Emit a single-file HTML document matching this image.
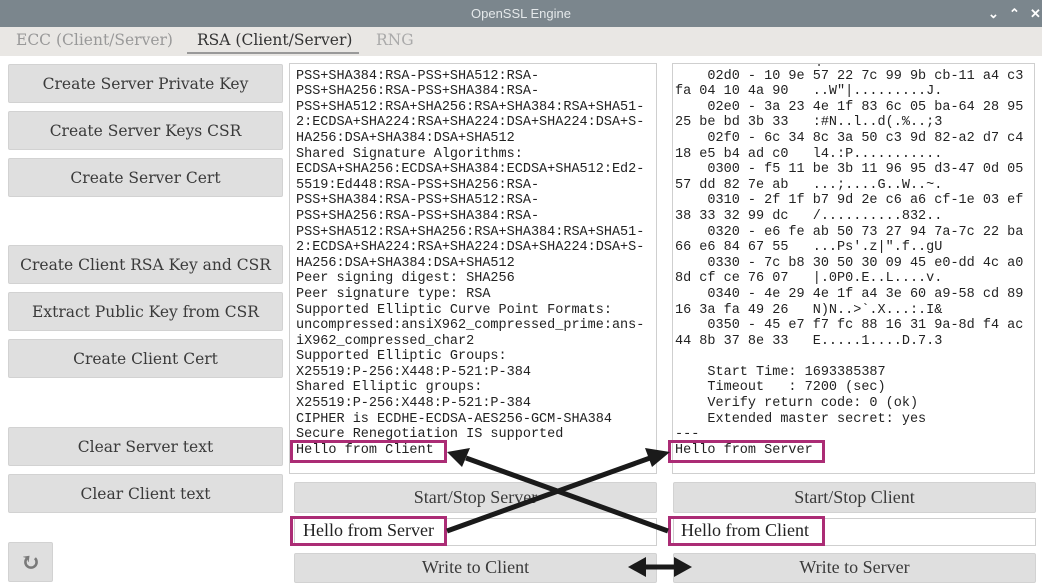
<!DOCTYPE html>
<html><head><meta charset="utf-8"><style>
*{box-sizing:border-box;margin:0;padding:0}
body{width:1042px;height:579px;overflow:hidden;background:#fff;position:relative;font-family:"Liberation Serif",serif}
.title{position:absolute;left:0;top:0;width:1042px;height:27px;background:#7b868d;color:#e4e8ea;font:13px "Liberation Sans",sans-serif;text-align:center;line-height:27px}
.ctl{position:absolute;top:0;color:#fff;font:bold 13px "Liberation Sans",sans-serif;line-height:27px}
.tabs{position:absolute;left:0;top:27px;width:1042px;height:29px;background:#e9e7e4}
.tab{position:absolute;top:4px;font-family:"DejaVu Serif",serif;font-size:15.5px;color:#999}
.btn{position:absolute;background:#dfdfdf;border:1px solid #d2d2d2;border-radius:2px;color:#3a3a3a;text-align:center;font-family:"DejaVu Serif",serif;font-size:15.5px}
.ta{position:absolute;background:#fff;border:1px solid #cfcfcf;overflow:hidden}
.ta pre{position:absolute;font:13.5px/15.6px "Liberation Mono",monospace;color:#222;white-space:pre}
.mb{position:absolute;border:3px solid #ab2c75}
.in{position:absolute;background:#fff;border:1px solid #cfcfcf}
.it{position:absolute;font-size:18px;color:#222;font-family:"Liberation Serif",serif}
</style></head><body>
<div class="title">OpenSSL Engine</div>
<div class="ctl" style="left:988px">&#8964;</div>
<div class="ctl" style="left:1009px">&#8963;</div>
<div class="ctl" style="left:1030px">✕</div>
<div class="tabs">
<div class="tab" style="left:16px">ECC (Client/Server)</div>
<div class="tab" style="left:197px;color:#333">RSA (Client/Server)</div>
<div class="tab" style="left:376px;color:#aaa">RNG</div>
<div style="position:absolute;left:187px;top:25px;width:172px;height:2px;background:#999"></div>
</div>
<div class="btn" style="left:8px;top:64px;width:275px;height:39px;line-height:38px">Create Server Private Key</div>
<div class="btn" style="left:8px;top:111px;width:275px;height:39px;line-height:38px">Create Server Keys CSR</div>
<div class="btn" style="left:8px;top:158px;width:275px;height:39px;line-height:38px">Create Server Cert</div>
<div class="btn" style="left:8px;top:245px;width:275px;height:39px;line-height:38px">Create Client RSA Key and CSR</div>
<div class="btn" style="left:8px;top:292px;width:275px;height:39px;line-height:38px">Extract Public Key from CSR</div>
<div class="btn" style="left:8px;top:339px;width:275px;height:39px;line-height:38px">Create Client Cert</div>
<div class="btn" style="left:8px;top:427px;width:275px;height:39px;line-height:38px">Clear Server text</div>
<div class="btn" style="left:8px;top:474px;width:275px;height:39px;line-height:38px">Clear Client text</div>
<div class="btn" style="left:8px;top:542px;width:45px;height:40px;line-height:38px;color:#7a7a7a;font-size:24px;font-weight:bold">&#8635;</div>

<div class="ta" style="left:289px;top:63px;width:368px;height:411px"><pre style="left:6px;top:-11px">0010720:RSA-PSS+SHA256:RSA-
PSS+SHA384:RSA-PSS+SHA512:RSA-
PSS+SHA256:RSA-PSS+SHA384:RSA-
PSS+SHA512:RSA+SHA256:RSA+SHA384:RSA+SHA51-
2:ECDSA+SHA224:RSA+SHA224:DSA+SHA224:DSA+S-
HA256:DSA+SHA384:DSA+SHA512
Shared Signature Algorithms:
ECDSA+SHA256:ECDSA+SHA384:ECDSA+SHA512:Ed2-
5519:Ed448:RSA-PSS+SHA256:RSA-
PSS+SHA384:RSA-PSS+SHA512:RSA-
PSS+SHA256:RSA-PSS+SHA384:RSA-
PSS+SHA512:RSA+SHA256:RSA+SHA384:RSA+SHA51-
2:ECDSA+SHA224:RSA+SHA224:DSA+SHA224:DSA+S-
HA256:DSA+SHA384:DSA+SHA512
Peer signing digest: SHA256
Peer signature type: RSA
Supported Elliptic Curve Point Formats:
uncompressed:ansiX962_compressed_prime:ans-
iX962_compressed_char2
Supported Elliptic Groups:
X25519:P-256:X448:P-521:P-384
Shared Elliptic groups:
X25519:P-256:X448:P-521:P-384
CIPHER is ECDHE-ECDSA-AES256-GCM-SHA384
Secure Renegotiation IS supported
Hello from Client</pre></div>
<div class="ta" style="left:672px;top:63px;width:363px;height:411px"><pre style="left:2px;top:-11px">1f ce b7 be 27   q0.. ..........
    02d0 - 10 9e 57 22 7c 99 9b cb-11 a4 c3
fa 04 10 4a 90   ..W"|.........J.
    02e0 - 3a 23 4e 1f 83 6c 05 ba-64 28 95
25 be bd 3b 33   :#N..l..d(.%..;3
    02f0 - 6c 34 8c 3a 50 c3 9d 82-a2 d7 c4
18 e5 b4 ad c0   l4.:P...........
    0300 - f5 11 be 3b 11 96 95 d3-47 0d 05
57 dd 82 7e ab   ...;....G..W..~.
    0310 - 2f 1f b7 9d 2e c6 a6 cf-1e 03 ef
38 33 32 99 dc   /..........832..
    0320 - e6 fe ab 50 73 27 94 7a-7c 22 ba
66 e6 84 67 55   ...Ps'.z|".f..gU
    0330 - 7c b8 30 50 30 09 45 e0-dd 4c a0
8d cf ce 76 07   |.0P0.E..L....v.
    0340 - 4e 29 4e 1f a4 3e 60 a9-58 cd 89
16 3a fa 49 26   N)N..>`.X...:.I&amp;
    0350 - 45 e7 f7 fc 88 16 31 9a-8d f4 ac
44 8b 37 8e 33   E.....1....D.7.3

    Start Time: 1693385387
    Timeout   : 7200 (sec)
    Verify return code: 0 (ok)
    Extended master secret: yes
---
Hello from Server</pre></div>

<div class="btn" style="left:294px;top:482px;width:363px;height:31px;line-height:29px;font-family:'Liberation Serif',serif;font-size:18px">Start/Stop Server</div>
<div class="btn" style="left:673px;top:482px;width:363px;height:31px;line-height:29px;font-family:'Liberation Serif',serif;font-size:18px">Start/Stop Client</div>
<div class="in" style="left:294px;top:518px;width:363px;height:28px"></div>
<div class="in" style="left:673px;top:518px;width:363px;height:28px"></div>
<div class="it" style="left:303px;top:520px">Hello from Server</div>
<div class="it" style="left:681px;top:520px">Hello from Client</div>
<div class="btn" style="left:294px;top:553px;width:363px;height:30px;line-height:27px;font-family:'Liberation Serif',serif;font-size:18px">Write to Client</div>
<div class="btn" style="left:673px;top:553px;width:363px;height:30px;line-height:27px;font-family:'Liberation Serif',serif;font-size:18px">Write to Server</div>

<div class="mb" style="left:290px;top:440px;width:157px;height:23px"></div>
<div class="mb" style="left:668px;top:440px;width:157px;height:23px"></div>
<div class="mb" style="left:290px;top:516px;width:157px;height:30px"></div>
<div class="mb" style="left:668px;top:516px;width:157px;height:30px"></div>

<svg style="position:absolute;left:0;top:0" width="1042" height="579">
<g stroke="#1a1a1a" stroke-width="5" fill="#1a1a1a">
<line x1="447" y1="531" x2="650" y2="458"/>
<line x1="668" y1="531" x2="466" y2="458"/>
<line x1="645" y1="567" x2="675" y2="567"/>
</g>
<g fill="#1a1a1a">
<polygon points="670,452 645,448 652,467"/>
<polygon points="447,452 462,467 470,448"/>
<polygon points="628,567 646,557 646,577"/>
<polygon points="692,567 674,557 674,577"/>
</g>
</svg>
</body></html>
